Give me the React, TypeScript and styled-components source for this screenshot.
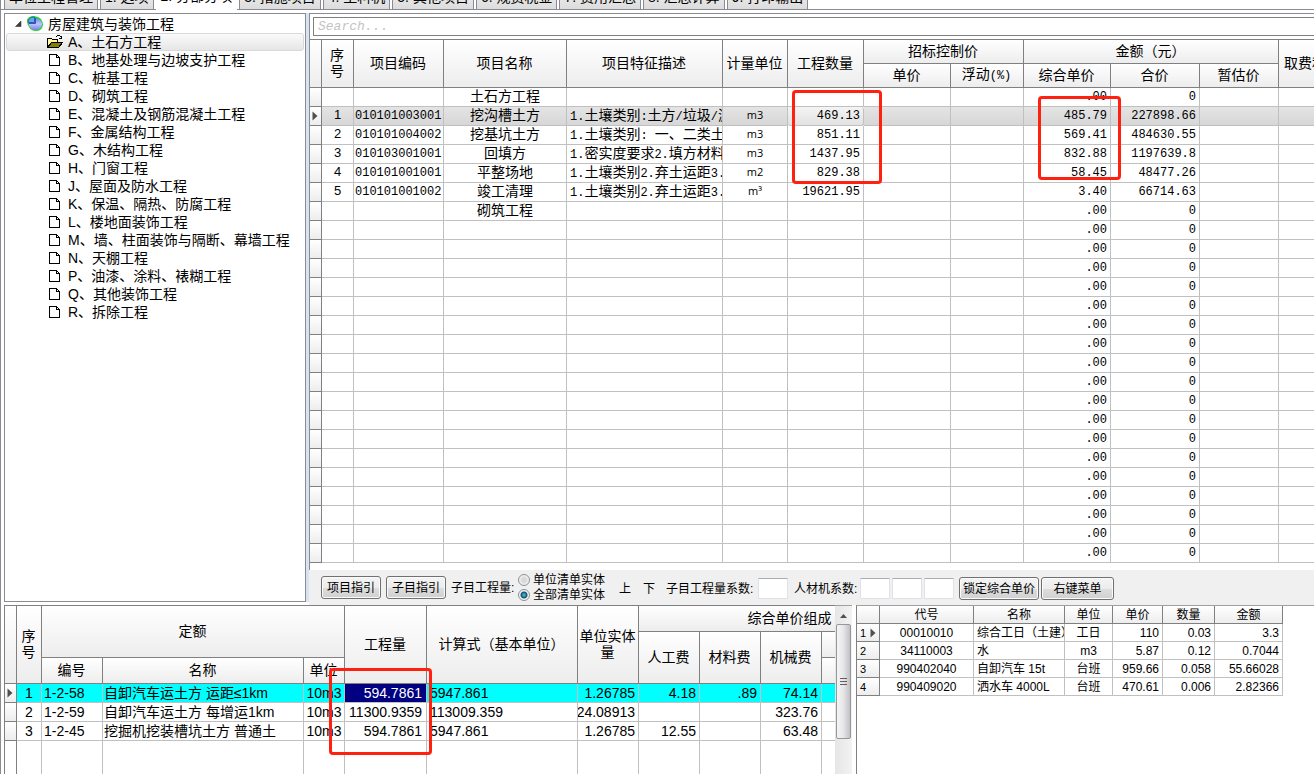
import React, { useState } from "react";
import styled, { createGlobalStyle, css } from "styled-components";

const SANS = `"Liberation Sans", "Noto Sans CJK SC", sans-serif`;
const MONO = `"Liberation Mono", "Noto Sans CJK SC", monospace`;
const LINE = "#808080";
const GRID = "#c0c0c0";
const FACE = "linear-gradient(#ffffff, #ededed)";

const GlobalStyle = createGlobalStyle`
  * { box-sizing: border-box; }
  body { margin: 0; background: #fff; color: #000; font: 14px/18px ${SANS}; }
  button, input { font: inherit; color: inherit; margin: 0; }
`;

const Window = styled.div`
  display: flex;
  flex-direction: column;
  height: 100vh;
  overflow: hidden;
  border-left: 1px solid #8b8b95;
`;

const TabStrip = styled.nav`
  flex: none;
  display: flex;
  align-items: flex-end;
  gap: 2px;
  height: 10px;
  padding-left: 3px;
  overflow: hidden;
  box-shadow: inset 0 -1px 0 #8b8b95;
`;

const Tab = styled.button<{ $active?: boolean }>`
  flex: none;
  height: ${(p) => (p.$active ? 25 : 24)}px;
  margin-bottom: ${(p) => (p.$active ? 0 : 1)}px;
  padding: 0 4px ${(p) => (p.$active ? 4 : 2)}px;
  border: 1px solid ${(p) => (p.$active ? "#fff" : "#8b8b95")};
  border-bottom: 0;
  background: ${(p) => (p.$active ? "#fff" : "linear-gradient(#f4f4f4, #dcdcdc)")};
  white-space: nowrap;
`;

const Upper = styled.div`
  flex: none;
  display: flex;
  margin-top: 3px;
  padding-left: 3px;
`;

const TreePane = styled.aside`
  flex: none;
  width: 302px;
  margin-bottom: 3px;
  border: 1px solid #8b8b95;
  padding: 1px;
`;

const Splitter = styled.div`
  flex: none;
  width: 3px;
  margin-bottom: 3px;
  background: #d5e3f3;
`;

const TreeList = styled.ul`
  list-style: none;
  margin: 0;
  padding: 0;
`;

const TreeRow = styled.div<{ $child?: boolean; $selected?: boolean }>`
  display: flex;
  align-items: center;
  gap: 5px;
  height: 18px;
  padding-left: ${(p) => (p.$child ? 40 : 8)}px;
  border: 1px solid transparent;
  border-radius: 3px;
  white-space: nowrap;
  cursor: default;
  ${(p) =>
    p.$selected &&
    css`
      border-color: #d9d9d9;
      background: linear-gradient(#fafafa, #e6e6e6);
    `}
`;

const GridPane = styled.section`
  flex: 1;
  min-width: 0;
  display: flex;
  flex-direction: column;
`;

const GridBody = styled.div`
  border-top: 1px solid #8b8b95;
  border-left: 1px solid #8b8b95;
  padding-bottom: 7px;
  overflow: hidden;
`;

const SearchBox = styled.input`
  display: block;
  width: calc(100% - 2px);
  height: 19px;
  margin: 3px 0 3px 3px;
  padding: 0 4px;
  border: 1px solid ${LINE};
  border-radius: 0;
  outline: 0;
  font: italic 13px/16px "Liberation Mono", monospace;
  &::placeholder { color: #c4c4c4; opacity: 1; }
`;

const GridArea = styled.div`
  position: relative;
`;

const Marker = styled.div`
  position: absolute;
  border: 3px solid #ff2010;
  border-radius: 4px;
  pointer-events: none;
`;
const QuantityMarker = styled(Marker)`left: 482px; top: 51px; width: 90px; height: 94px;`;
const PriceMarker = styled(Marker)`left: 728px; top: 57px; width: 83px; height: 84px;`;
const NormMarker = styled(Marker)`left: 324px; top: 63px; width: 103px; height: 87px;`;

const Table = styled.table<{ $size: number }>`
  width: 1px;
  table-layout: fixed;
  border-collapse: separate;
  border-spacing: 0;
  border-top: 1px solid ${LINE};
  font-size: ${(p) => p.$size}px;
`;

const Head = styled.th<{ $size?: number }>`
  padding: ${(p) => (p.$size ? "0 1px" : "0 2px 1px 1px")};
  border-right: 1px solid ${LINE};
  border-bottom: 1px solid ${LINE};
  background: ${FACE};
  font-weight: normal;
  font-size: ${(p) => p.$size ?? 14}px;
  line-height: 16px;
  text-align: center;
  overflow: hidden;
`;

const Row = styled.tr<{ $height: number; $tone?: "grey" | "cyan" }>`
  height: ${(p) => p.$height}px;
  line-height: ${(p) => p.$height - 2}px;
  ${(p) => p.$tone === "grey" && "background: linear-gradient(#e4e4e4, #d6d6d6);"}
  ${(p) => p.$tone === "cyan" && "background: #00ffff;"}
`;

const Cell = styled.td<{ $align?: string; $font?: string; $pad?: number }>`
  padding: 0 ${(p) => p.$pad ?? 3}px;
  border-right: 1px solid ${GRID};
  border-bottom: 1px solid ${GRID};
  text-align: ${(p) => p.$align ?? "left"};
  white-space: nowrap;
  overflow: hidden;
  ${(p) => p.$font === "mono" && `font-family: ${MONO}; font-size: 12px;`}
  ${(p) => p.$font === "small" && `font-family: "Open Sans", sans-serif; font-size: 11px; line-height: 15px; vertical-align: top;`}
  ${(p) => p.$font === "num" && `font-size: 13px; line-height: 16px; vertical-align: top;`}
  ${(p) => p.$font === "text" && `line-height: 16px; vertical-align: top;`}
`;

/* Values wider than their column lose their leading digits. */
const Amount = styled.div`
  display: flex;
  justify-content: flex-end;
`;

const RowHead = styled.td`
  padding: 0 2px;
  border-right: 1px solid ${LINE};
  border-bottom: 1px solid ${LINE};
  background: ${FACE};
  line-height: 1px;
`;

const NumberedHead = styled(RowHead)`
  padding: 0 3px;
  font-size: 11px;
  line-height: 14px;
`;

const HeadInner = styled.div`
  display: flex;
  align-items: center;
  justify-content: space-between;
`;

const FocusCell = styled(Cell)`
  border-radius: 3px;
  background: linear-gradient(#f4f4f4, #e2e2e2);
`;

const ActiveCell = styled(Cell)`
  background: #000080;
  color: #fff;
`;

const FillCell = styled.td<{ $line?: string }>`
  padding: 0;
  border-right: 1px solid ${(p) => p.$line ?? GRID};
`;

const Latin = styled.span`
  font-family: ${MONO};
  font-size: 12px;
`;

const Toolbar = styled.div`
  display: flex;
  align-items: center;
  height: 35px;
  padding-left: 12px;
  background: #f0f0f0;
  font-size: 12px;
  white-space: nowrap;
`;

const Group = styled.div<{ $before?: number; $gap?: number }>`
  flex: none;
  display: flex;
  align-items: center;
  gap: ${(p) => p.$gap ?? 0}px;
  margin-left: ${(p) => p.$before ?? 0}px;
`;

/* Everything right of the scope switch sits a little lower in the bar. */
const LoweredGroup = styled(Group)`
  padding-top: 2px;
`;

const PushButton = styled.button<{ $width: number }>`
  width: ${(p) => p.$width}px;
  height: 23px;
  padding: 0;
  border: 1px solid #707070;
  border-radius: 3px;
  background: linear-gradient(#f4f4f4, #ececec 50%, #dedede 50%, #d0d0d0);
  box-shadow: inset 0 0 0 1px #fbfbfb;
  line-height: 18px;
`;

const FlatButton = styled.button`
  width: 12px;
  padding: 0;
  border: 0;
  background: none;
`;

const FieldLabel = styled.label<{ $width?: number }>`
  width: ${(p) => (p.$width ? p.$width + "px" : "auto")};
`;

const SmallInput = styled.input`
  width: 30px;
  height: 21px;
  padding: 0 2px;
  border: 1px solid #dfe2e8;
  border-top-color: #abadb3;
  border-radius: 1px;
  background: #fff;
`;

const RadioStack = styled.div`
  display: flex;
  flex-direction: column;
`;

const RadioLabel = styled.label`
  display: flex;
  align-items: center;
  gap: 3px;
  height: 15px;
  line-height: 15px;
`;

const Radio = styled.input`
  appearance: none;
  width: 12px;
  height: 12px;
  border: 1px solid #8e8f8f;
  border-radius: 50%;
  background: radial-gradient(circle, #d8d8d8 0 30%, #f4f4f4 70%);
  &:checked {
    background: radial-gradient(circle at 50% 50%, #4fc3ee 0, #14506f 3px, #f4f4f4 4px);
  }
`;

const Lower = styled.div`
  flex: 1;
  min-height: 0;
  display: flex;
  padding-left: 3px;
`;

const NormPane = styled.section`
  flex: 0 1 848px;
  min-width: 0;
  display: flex;
`;

const NormArea = styled.div`
  position: relative;
  flex: 1;
  min-width: 0;
  overflow: hidden;
  border-left: 1px solid ${LINE};
  & > table { height: 100%; }
`;

const ResourcePane = styled.section`
  flex: 1;
  min-width: 0;
  margin-left: 4px;
  border-left: 1px solid ${LINE};
  border-top: 1px solid #a0a0a0;
  overflow: hidden;
  & > table { border-top: 0; }
`;

const ScrollTrack = styled.div`
  flex: none;
  width: 17px;
  display: flex;
  flex-direction: column;
  background: linear-gradient(90deg, #e6e6e6, #f2f2f2);
  border-top: 1px solid #a0a0a0;
`;

const ScrollButton = styled.button`
  height: 18px;
  padding: 0;
  border: 0;
  background: none;
  line-height: 1px;
`;

const ScrollThumb = styled.div`
  height: 115px;
  margin: 0 1px;
  display: flex;
  align-items: center;
  justify-content: center;
  border: 1px solid #979797;
  border-radius: 2px;
  background: linear-gradient(90deg, #f5f5f5, #e6e6e8 50%, #c0c0c6);
`;

const PageIcon = () => (
  <svg width="16" height="14" viewBox="0 0 16 14" shapeRendering="crispEdges">
    <path d="M2.500 1.500h7l3 3v8h-10z" fill="#fff" stroke="#000" />
    <path d="M9.500 1.500v3h3" fill="none" stroke="#000" />
  </svg>
);

const FolderIcon = () => (
  <svg width="16" height="14" viewBox="0 0 16 14" shapeRendering="crispEdges">
    <path d="M0.500 12.500v-9h4l1 1h5v3" fill="#fff8a0" stroke="#000" />
    <path d="M0.500 12.500l4-5h11l-4 5z" fill="#808000" stroke="#000" />
    <path d="M9 1.500h1M10 0.500h3M13 1.500h1M14 2.500h1M12 3.500h3M14.500 1v3" fill="none" stroke="#000" />
  </svg>
);

const PieIcon = () => (
  <svg width="16" height="16" viewBox="0 0 16 16">
    <defs>
      <linearGradient id="pie" x1="0" y1="0" x2="0" y2="1">
        <stop offset="0" stopColor="#6c86e8" />
        <stop offset="0.5" stopColor="#bcc4ff" />
        <stop offset="1" stopColor="#8080e8" />
      </linearGradient>
    </defs>
    <path d="M0 4Q1 1 5 0Q11 0 14 3Q16 6 16 9Q15 15 9 15Q4 15 2 11Q0 8 0 4z" fill="#12e012" />
    <path d="M8.500 2C13 2 15 5 15 8.500C15 12 12 14 8.500 14C5 14 2 12 2 8.500V7.500H8.500z" fill="url(#pie)" />
    <path d="M8.500 2V7.500H2" fill="none" stroke="#3d4fb0" />
    <path d="M7.500 6.500V1C3.500 1 1 3 1 6.500z" fill="#62a8ee" stroke="#2a5fb0" />
  </svg>
);

const Expander = () => (
  <svg width="7" height="6" viewBox="0 0 7 6">
    <path d="M6 0v5.500H0.500z" fill="#404040" stroke="#222" strokeWidth="0.500" />
  </svg>
);

const Pointer = () => (
  <svg width="6" height="10" viewBox="0 0 6 10">
    <path d="M0.500 0.500L5.500 5L0.500 9.500z" fill="#505050" />
  </svg>
);

const tabs = [
  "单位工程管理", "1. 选项", "2. 分部分项", "3. 措施项目", "4. 工料机",
  "5. 其他项目", "6. 规费税金", "7. 费用汇总", "8. 汇总计算", "9. 打印输出",
];

const sections = [
  "A、土石方工程", "B、地基处理与边坡支护工程", "C、桩基工程", "D、砌筑工程",
  "E、混凝土及钢筋混凝土工程", "F、金属结构工程", "G、木结构工程", "H、门窗工程",
  "J、屋面及防水工程", "K、保温、隔热、防腐工程", "L、楼地面装饰工程",
  "M、墙、柱面装饰与隔断、幕墙工程", "N、天棚工程", "P、油漆、涂料、裱糊工程",
  "Q、其他装饰工程", "R、拆除工程",
];

type Item = { no: string; code: string; name: string; desc: string; unit: string; qty: string; price: string; total: string };
const item = (no: string, code: string, name: string, desc: string, unit: string, qty: string, price = ".00", total = "0"): Item =>
  ({ no, code, name, desc, unit, qty, price, total });

const items: Item[] = [
  item("", "", "土石方工程", "", "", ""),
  item("1", "010101003001", "挖沟槽土方", "1.土壤类别:土方/垃圾/淤泥", "m3", "469.13", "485.79", "227898.66"),
  item("2", "010101004002", "挖基坑土方", "1.土壤类别: 一、二类土", "m3", "851.11", "569.41", "484630.55"),
  item("3", "010103001001", "回填方", "1.密实度要求2.填方材料", "m3", "1437.95", "832.88", "1197639.8"),
  item("4", "010101001001", "平整场地", "1.土壤类别2.弃土运距3.", "m2", "829.38", "58.45", "48477.26"),
  item("5", "010101001002", "竣工清理", "1.土壤类别2.弃土运距3.", "m³", "19621.95", "3.40", "66714.63"),
  item("", "", "砌筑工程", "", "", ""),
  ...Array.from({ length: 18 }, () => item("", "", "", "", "", "")),
];

const norms = [
  ["1", "1-2-58", "自卸汽车运土方 运距≤1km", "10m3", "594.7861", "5947.861", "1.26785", "4.18", ".89", "74.14"],
  ["2", "1-2-59", "自卸汽车运土方 每增运1km", "10m3", "11300.9359", "113009.359", "24.08913", "", "", "323.76"],
  ["3", "1-2-45", "挖掘机挖装槽坑土方 普通土", "10m3", "594.7861", "5947.861", "1.26785", "12.55", "", "63.48"],
];

const resources = [
  ["1", "00010010", "综合工日（土建）", "工日", "110", "0.03", "3.3"],
  ["2", "34110003", "水", "m3", "5.87", "0.12", "0.7044"],
  ["3", "990402040", "自卸汽车 15t", "台班", "959.66", "0.058", "55.66028"],
  ["4", "990409020", "洒水车 4000L", "台班", "470.61", "0.006", "2.82366"],
];

const Columns = ({ widths }: { widths: number[] }) => (
  <colgroup>
    {widths.map((w, i) => <col key={i} width={w} />)}
  </colgroup>
);

/* Half-width runs in a description use the fixed-pitch face. */
const Mixed = ({ text }: { text: string }) => (
  <>
    {text.split(/([\x20-\x7e]+)/).map((part, i) => (i % 2 ? <Latin key={i}>{part}</Latin> : part))}
  </>
);

const ItemTable = () => (
  <Table $size={14}>
    <Columns widths={[12, 32, 90, 123, 156, 65, 76, 87, 73, 87, 89, 79, 68]} />
    <thead>
      <Row $height={24}>
        <Head rowSpan={2} />
        <Head rowSpan={2}>序<br />号</Head>
        <Head rowSpan={2}>项目编码</Head>
        <Head rowSpan={2}>项目名称</Head>
        <Head rowSpan={2}>项目特征描述</Head>
        <Head rowSpan={2}>计量单位</Head>
        <Head rowSpan={2}>工程数量</Head>
        <Head colSpan={2}>招标控制价</Head>
        <Head colSpan={3}>金额（元）</Head>
        <Head rowSpan={2}>取费程序</Head>
      </Row>
      <Row $height={24}>
        <Head>单价</Head>
        <Head>浮动<Latin>(%)</Latin></Head>
        <Head>综合单价</Head>
        <Head>合价</Head>
        <Head>暂估价</Head>
      </Row>
    </thead>
    <tbody>
      {items.map((r, i) => {
        const Qty = i === 1 ? FocusCell : Cell;
        return (
          <Row key={i} $height={19} $tone={i === 1 ? "grey" : undefined}>
            <RowHead>{i === 1 && <Pointer />}</RowHead>
            <Cell $align="center" $font="num">{r.no}</Cell>
            <Cell $pad={1} $font="mono">{r.code}</Cell>
            <Cell $align="center" $font="text">{r.name}</Cell>
            <Cell $font="text"><Mixed text={r.desc} /></Cell>
            <Cell $align="center" $font="small">{r.unit}</Cell>
            <Qty $align="right" $font="mono">{r.qty}</Qty>
            <Cell />
            <Cell />
            <Cell $align="right" $font="mono">{r.price}</Cell>
            <Cell $align="right" $font="mono">{r.total}</Cell>
            <Cell />
            <Cell />
          </Row>
        );
      })}
    </tbody>
  </Table>
);

const NormTable = () => (
  <Table $size={14}>
    <Columns widths={[12, 25, 61, 201, 41, 82, 151, 61, 61, 61, 61, 120]} />
    <thead>
      <Row $height={26}>
        <Head rowSpan={3} />
        <Head rowSpan={3}>序<br />号</Head>
        <Head rowSpan={2} colSpan={3}>定额</Head>
        <Head rowSpan={3}>工程量</Head>
        <Head rowSpan={3}>计算式（基本单位）</Head>
        <Head rowSpan={3}>单位实体量</Head>
        <Head colSpan={4}>综合单价组成</Head>
      </Row>
      <Row $height={26}>
        <Head rowSpan={2}>人工费</Head>
        <Head rowSpan={2}>材料费</Head>
        <Head rowSpan={2}>机械费</Head>
        <Head />
      </Row>
      <Row $height={26}>
        <Head>编号</Head>
        <Head>名称</Head>
        <Head>单位</Head>
        <Head />
      </Row>
    </thead>
    <tbody>
      {norms.map((r, i) => {
        const Qty = i === 0 ? ActiveCell : Cell;
        return (
          <Row key={r[0]} $height={19} $tone={i === 0 ? "cyan" : undefined}>
            <RowHead>{i === 0 && <Pointer />}</RowHead>
            <Cell $align="center">{r[0]}</Cell>
            <Cell $pad={2}>{r[1]}</Cell>
            <Cell $pad={1}>{r[2]}</Cell>
            <Cell $align="center" $pad={1}>{r[3]}</Cell>
            <Qty $align="right" $pad={4}>{r[4]}</Qty>
            <Cell>{r[5]}</Cell>
            <Cell><Amount>{r[6]}</Amount></Cell>
            <Cell $align="right">{r[7]}</Cell>
            <Cell $align="right">{r[8]}</Cell>
            <Cell $align="right">{r[9]}</Cell>
            <Cell />
          </Row>
        );
      })}
      <tr>
        {Array.from({ length: 12 }, (_, i) => <FillCell key={i} $line={i === 0 ? LINE : GRID} />)}
      </tr>
    </tbody>
  </Table>
);

const ResourceTable = () => (
  <Table $size={12}>
    <Columns widths={[23, 94, 91, 48, 50, 52, 68]} />
    <thead>
      <Row $height={18}>
        {["", "代号", "名称", "单位", "单价", "数量", "金额"].map((h) => <Head key={h} $size={12}>{h}</Head>)}
      </Row>
    </thead>
    <tbody>
      {resources.map((r, i) => (
        <Row key={r[0]} $height={18}>
          <NumberedHead>
            <HeadInner>{r[0]}{i === 0 && <Pointer />}</HeadInner>
          </NumberedHead>
          <Cell $align="center">{r[1]}</Cell>
          <Cell>{r[2]}</Cell>
          <Cell $align="center">{r[3]}</Cell>
          <Cell $align="right">{r[4]}</Cell>
          <Cell $align="right">{r[5]}</Cell>
          <Cell $align="right">{r[6]}</Cell>
        </Row>
      ))}
    </tbody>
  </Table>
);

const ActionBar = () => {
  const [scope, setScope] = useState("all");
  return (
    <Toolbar>
      <Group $gap={5}>
        <PushButton $width={60}>项目指引</PushButton>
        <PushButton $width={60}>子目指引</PushButton>
        <FieldLabel as="span" $width={66}>子目工程量:</FieldLabel>
      </Group>
      <Group $before={1}>
        <RadioStack role="radiogroup" aria-label="子目工程量">
          <RadioLabel>
            <Radio type="radio" name="scope" checked={scope === "unit"} onChange={() => setScope("unit")} />
            单位清单实体
          </RadioLabel>
          <RadioLabel>
            <Radio type="radio" name="scope" checked={scope === "all"} onChange={() => setScope("all")} />
            全部清单实体
          </RadioLabel>
        </RadioStack>
      </Group>
      <LoweredGroup $before={14} $gap={12}>
        <FlatButton>上</FlatButton>
        <FlatButton>下</FlatButton>
      </LoweredGroup>
      <LoweredGroup $before={11}>
        <FieldLabel htmlFor="itemFactor" $width={92}>子目工程量系数:</FieldLabel>
        <SmallInput id="itemFactor" />
      </LoweredGroup>
      <LoweredGroup $before={6} $gap={2}>
        <FieldLabel htmlFor="labourFactor" $width={64}>人材机系数:</FieldLabel>
        <SmallInput id="labourFactor" />
        <SmallInput aria-label="材料系数" />
        <SmallInput aria-label="机械系数" />
      </LoweredGroup>
      <LoweredGroup $before={5} $gap={2}>
        <PushButton $width={80}>锁定综合单价</PushButton>
        <PushButton $width={73}>右键菜单</PushButton>
      </LoweredGroup>
    </Toolbar>
  );
};

export default function App() {
  return (
    <Window>
      <GlobalStyle />
      <TabStrip>
        {tabs.map((t, i) => <Tab key={t} $active={i === 2}>{t}</Tab>)}
      </TabStrip>
      <Upper>
        <TreePane>
          <TreeList>
            <li>
              <TreeRow><Expander /><PieIcon />房屋建筑与装饰工程</TreeRow>
              <TreeList>
                {sections.map((s, i) => (
                  <li key={s}>
                    <TreeRow $child $selected={i === 0}>
                      {i === 0 ? <FolderIcon /> : <PageIcon />}
                      {s}
                    </TreeRow>
                  </li>
                ))}
              </TreeList>
            </li>
          </TreeList>
        </TreePane>
        <Splitter />
        <GridPane>
          <GridBody>
            <SearchBox type="text" placeholder="Search..." aria-label="Search" />
            <GridArea>
              <ItemTable />
              <QuantityMarker />
              <PriceMarker />
            </GridArea>
          </GridBody>
          <ActionBar />
        </GridPane>
      </Upper>
      <Lower>
        <NormPane>
          <NormArea>
            <NormTable />
            <NormMarker />
          </NormArea>
          <ScrollTrack>
            <ScrollButton aria-label="Scroll up">
              <svg width="7" height="4" viewBox="0 0 7 4"><path d="M0 4L3.500 0L7 4z" fill="#505050" /></svg>
            </ScrollButton>
            <ScrollThumb>
              <svg width="7" height="8" viewBox="0 0 7 8" shapeRendering="crispEdges">
                <path d="M0 0.500h7M0 3.500h7M0 6.500h7" stroke="#606060" />
              </svg>
            </ScrollThumb>
          </ScrollTrack>
        </NormPane>
        <ResourcePane>
          <ResourceTable />
        </ResourcePane>
      </Lower>
    </Window>
  );
}
